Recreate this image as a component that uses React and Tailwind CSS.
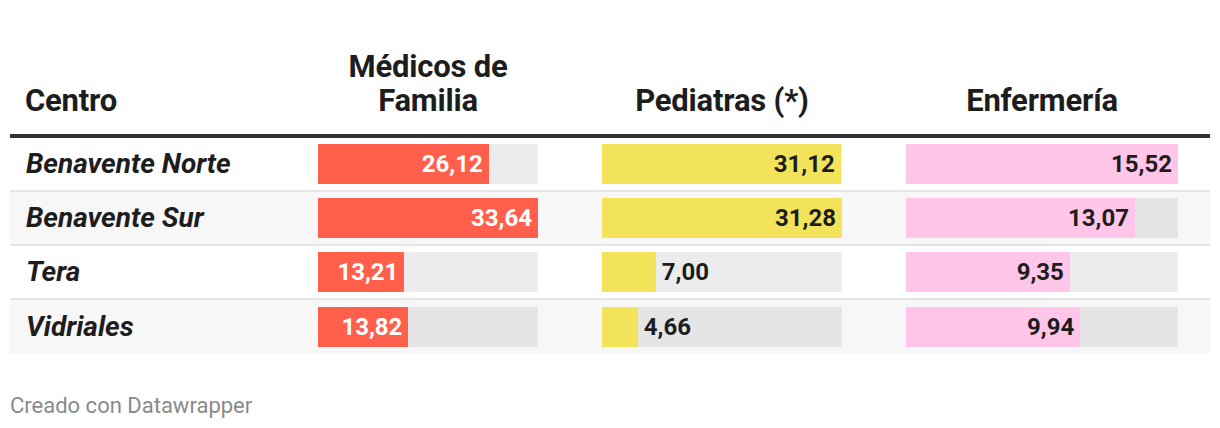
import React from "react";

const rows = [
  { name: "Benavente Norte", m: 26.12, p: 31.12, e: 15.52, bg: "bg-white", track: "bg-[#ececec]" },
  { name: "Benavente Sur", m: 33.64, p: 31.28, e: 13.07, bg: "bg-[#f7f7f7]", track: "bg-[#e5e5e5]" },
  { name: "Tera", m: 13.21, p: 7.0, e: 9.35, bg: "bg-white", track: "bg-[#ececec]" },
  { name: "Vidriales", m: 13.82, p: 4.66, e: 9.94, bg: "bg-[#f7f7f7]", track: "bg-[#e5e5e5]" },
];

const fmt = (v) => v.toFixed(2).replace(".", ",");

function Bar({ value, max, width, color, textColor, track, minInside }) {
  const w = (value / max) * width;
  const inside = w >= minInside;
  return (
    <div className={`relative h-[40px] ${track} flex`} style={{ width }}>
      <div className={`h-full ${color} flex items-center justify-end`} style={{ width: w }}>
        {inside && (
          <span className={`pr-[6px] text-[24px] font-bold leading-none ${textColor}`}>{fmt(value)}</span>
        )}
      </div>
      {!inside && (
        <span className="pl-[6px] self-center text-[24px] font-bold leading-none text-[#1d1d1d]">{fmt(value)}</span>
      )}
    </div>
  );
}

export default function App() {
  return (
    <div className="w-[1220px] h-[428px] bg-white px-[10px]" style={{ fontFamily: "Roboto, 'Liberation Sans', sans-serif" }}>
      <div className="w-[1200px]">
        <div className="grid grid-cols-[276px_284px_304px_336px] border-b-4 border-[#333] pt-[50px] pb-[16px] text-[31px] leading-[34px] font-bold text-[#1d1d1d] items-end tracking-[-0.2px]">
          <div className="pl-[15px]">Centro</div>
          <div className="text-center">Médicos de<br />Familia</div>
          <div className="text-center">Pediatras (*)</div>
          <div className="text-center">Enfermería</div>
        </div>
        {rows.map((r, i) => (
          <div
            key={r.name}
            className={`grid grid-cols-[276px_284px_304px_336px] h-[54px] items-center ${r.bg} ${i < rows.length - 1 ? "border-b-2 border-[#e5e5e5]" : "h-[52px]"}`}
          >
            <div className="pl-[16px] text-[28px] font-bold italic text-[#1d1d1d]">{r.name}</div>
            <div className="flex justify-center">
              <Bar value={r.m} max={33.64} width={220} color="bg-[#ff5f4b]" textColor="text-white" track={r.track} minInside={70} />
            </div>
            <div className="flex justify-center">
              <Bar value={r.p} max={31.28} width={240} color="bg-[#f2e35a]" textColor="text-[#1d1d1d]" track={r.track} minInside={70} />
            </div>
            <div className="flex justify-center">
              <Bar value={r.e} max={15.52} width={272} color="bg-[#ffc6e9]" textColor="text-[#1d1d1d]" track={r.track} minInside={70} />
            </div>
          </div>
        ))}
        <div className="pt-[35px] text-[22px] text-[#8a8a8a]">Creado con Datawrapper</div>
      </div>
    </div>
  );
}
